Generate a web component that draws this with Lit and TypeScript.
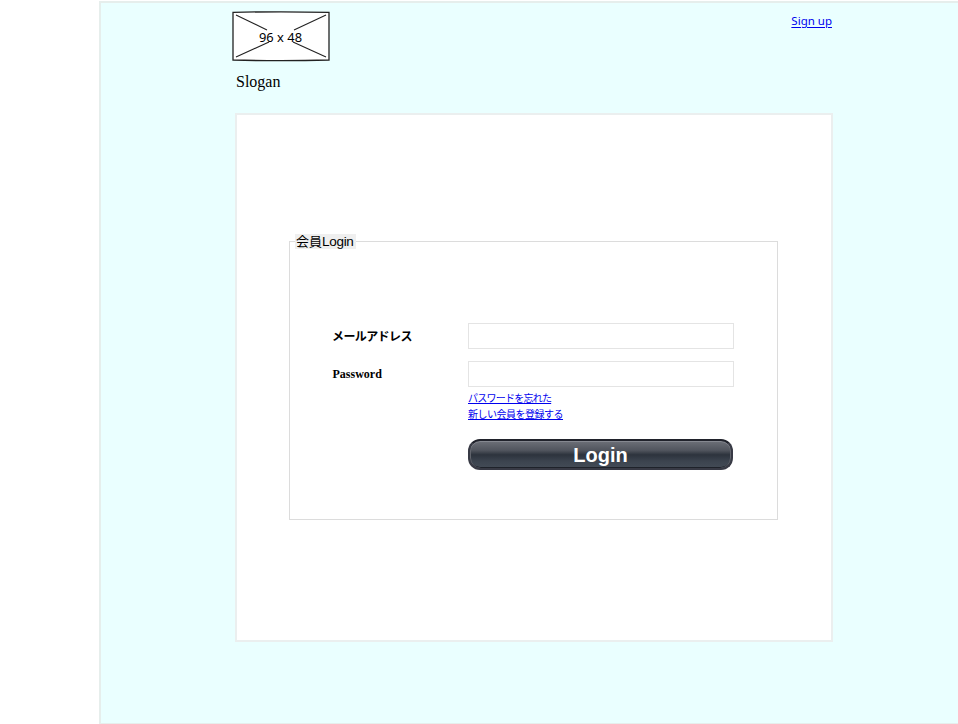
import { LitElement, html, css } from "lit";
import { customElement } from "lit/decorators.js";

@customElement("logo-placeholder")
class LogoPlaceholder extends LitElement {
  static styles = css`
    :host { display: block; width: 100px; height: 52px; }
    svg { display: block; }
    .frame { fill: #fff; stroke: #222; stroke-width: 1.3; }
    .lines { fill: none; stroke: #222; stroke-width: 1.1; }
    .size { font: 12px "Noto Sans", "Open Sans", sans-serif; fill: #000; }
  `;
  render() {
    return html`<svg width="100" height="52" viewBox="0 0 100 52">
      <path class="frame" d="M2 2.4Q50 1.2 98 2.4V50Q50 51.4 2 50Z" />
      <path class="lines" d="M5 5L36 20M95 5L63 20M5 47L38 32M95 47L62 32" />
      <text class="size" x="28" y="32" textLength="43" lengthAdjust="spacingAndGlyphs">96 x 48</text>
    </svg>`;
  }
}

@customElement("login-form")
class LoginForm extends LitElement {
  static styles = css`
    :host { display: block; }
    .group {
      box-sizing: border-box; width: 489px; height: 286px; margin: 0;
      padding: 74px 0 0 43px; border: 1px solid #dcdcdc; min-width: 0;
    }
    .title {
      display: flex; align-items: center; height: 15px; margin-left: -38px;
      padding: 0 2px 0 1px; background: #efefef; color: #000; width: 58px;
      font: 13.5px/15px "Liberation Sans", "Noto Sans CJK JP", sans-serif; white-space: nowrap;
    }
    .word { font-size: 13.5px; letter-spacing: -0.3px; }
    .kanji { font-size: 13px; }
    .row { display: grid; grid-template-columns: 135px 266px; align-items: center; height: 26px; margin-bottom: 12px; }
    .label { font: bold 12px/16px "Liberation Serif", serif; margin-left: -0.5px; }
    .jp { font: bold 12px/16px "Noto Sans CJK JP", sans-serif; letter-spacing: -0.6px; margin-left: -1px; }
    .field {
      box-sizing: border-box; width: 266px; height: 26px; margin: 0; padding: 0 4px;
      border: 1px solid #e4e4e4; border-radius: 0; background: #fff; outline: none;
      font: 13px "Liberation Sans", sans-serif;
    }
    .actions { margin-left: 135px; display: flex; flex-direction: column; align-items: flex-start; margin-top: -9px; }
    .link { color: #0000ee; font: 10px/16px "Noto Sans CJK JP", sans-serif; text-underline-offset: 1px; white-space: nowrap; }
    .forgot { letter-spacing: -0.76px; }
    .join { letter-spacing: -0.5px; }
    .submit {
      box-sizing: border-box; width: 265px; height: 31px; margin: 17px 0 0; padding: 1px 0 0;
      border: 2px solid #383a45; border-top-color: #20222b; border-radius: 12px;
      background: linear-gradient(#6d7078 0, #50545d 35%, #2d333d 51%, #3c444f 75%, #434b56 100%);
      box-shadow: inset 0 1px #858890, inset 1px 0 #61646c, inset -1px 0 #61646c, inset 0 -1px #1e222a;
      color: #fff; font: bold 20px/26px "Liberation Sans", sans-serif; text-align: center;
    }
  `;
  render() {
    return html`<fieldset class="group">
      <legend class="title"><span class="kanji">会員</span><span class="word">Login</span></legend>
      <div class="row"><label class="label jp" for="mail">メールアドレス</label><input class="field" id="mail" type="email" /></div>
      <div class="row"><label class="label" for="pass">Password</label><input class="field" id="pass" type="password" /></div>
      <div class="actions">
        <a class="link forgot" href="#">パスワードを忘れた</a>
        <a class="link join" href="#">新しい会員を登録する</a>
        <button class="submit" type="button">Login</button>
      </div>
    </fieldset>`;
  }
}

@customElement("app-root")
class AppRoot extends LitElement {
  static styles = css`
    :host { display: block; box-sizing: border-box; height: 724px; padding: 1px 0 0 99px; overflow: hidden; background: #fff; color: #000; }
    .page { box-sizing: border-box; height: 724px; border: 2px solid #e6eeec; border-right: 0; background: #eaffff; }
    .content { width: 598px; margin-left: 134px; }
    .header { display: flex; justify-content: space-between; height: 110px; padding: 7px 1px 0 0; box-sizing: border-box; }
    .logo { margin-left: -4px; }
    .slogan { margin: 11px 0 0 5px; font: 16px/18px "Liberation Serif", serif; }
    .signup { color: #0000ee; font: 11.5px/17px "Noto Sans", sans-serif; margin-top: 2px; text-underline-offset: 2px; height: 17px; }
    .panel { box-sizing: border-box; width: 598px; height: 529px; padding: 119px 0 0 52px; border: 2px solid #ebefef; background: #fff; }
  `;
  render() {
    return html`<div class="page"><div class="content">
      <div class="header">
        <div class="logo"><logo-placeholder></logo-placeholder><div class="slogan">Slogan</div></div>
        <a class="signup" href="#">Sign up</a>
      </div>
      <div class="panel"><login-form></login-form></div>
    </div></div>`;
  }
}
